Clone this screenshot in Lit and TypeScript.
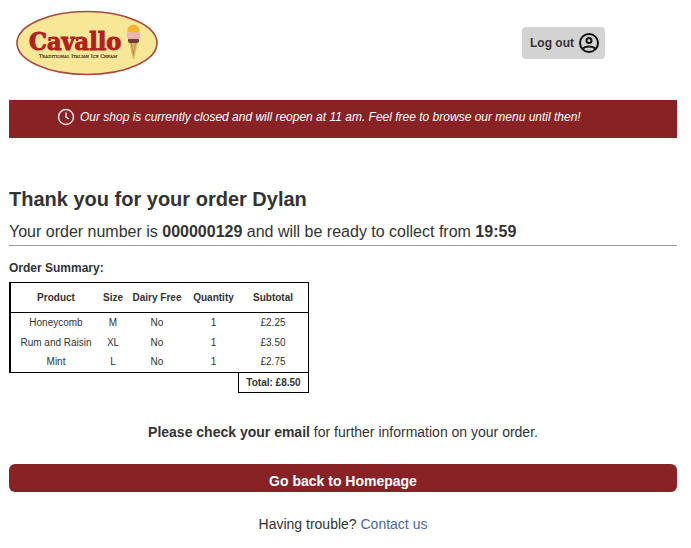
import { LitElement, html, css } from "lit";
import { customElement, state } from "lit/decorators.js";

interface OrderLine {
  product: string;
  size: string;
  dairyFree: string;
  quantity: number;
  subtotal: string;
}

@customElement("cavallo-logo")
class CavalloLogo extends LitElement {
  static styles = css`
    :host { display: block; width: 144px; height: 66px; }
    svg { display: block; }
    .name { font: bold 25px "DejaVu Serif Condensed", "DejaVu Serif", serif; fill: #b3201c; stroke: #b3201c; stroke-width: 1; }
    .tagline { font: 5px "DejaVu Serif", serif; fill: #4a4426; stroke: #4a4426; stroke-width: 0.2; font-variant: small-caps; }
  `;
  render() {
    return html`
      <svg width="144" height="66" viewBox="0 0 144 66" role="img" aria-label="Cavallo">
        <ellipse cx="72" cy="33" rx="70" ry="31.5" fill="#f8e796" stroke="#a94a41" stroke-width="1.6" />
        <text class="name" x="14" y="40">Cavallo</text>
        <text class="tagline" x="24" y="48">Traditional Italian Ice Cream</text>
        <path d="M114 31 h9 l-4 18 h-1 z" fill="#dcb267" />
        <path d="M116 32 l3 14 M121 32 l-3 12" stroke="#b98740" stroke-width="0.7" fill="none" />
        <rect x="113" y="28" width="11" height="5" rx="2" fill="#71402f" />
        <rect x="112" y="21" width="13" height="8" rx="3" fill="#eeb4b8" />
        <path d="M112.500 21.500 c-1-8 12-10 12 0 c-3 2-9 1-12 0z" fill="#f5b52f" />
      </svg>
    `;
  }
}

@customElement("order-table")
class OrderTable extends LitElement {
  @state() private lines: OrderLine[] = [
    { product: "Honeycomb", size: "M", dairyFree: "No", quantity: 1, subtotal: "£2.25" },
    { product: "Rum and Raisin", size: "XL", dairyFree: "No", quantity: 1, subtotal: "£3.50" },
    { product: "Mint", size: "L", dairyFree: "No", quantity: 1, subtotal: "£2.75" },
  ];

  static styles = css`
    :host { display: block; }
    table { border-spacing: 0; table-layout: fixed; width: 300px; font-size: 10px; line-height: 12px; text-align: center; }
    th, td { padding: 0; white-space: nowrap; }
    .product { width: 90px; }
    .size { width: 24px; }
    .dairy { width: 64px; }
    .quantity { width: 49px; }
    thead th { height: 29px; border-top: 1px solid #000; border-bottom: 1px solid #000; }
    tbody td { height: 19px; }
    tbody tr:first-child td { height: 20px; }
    tbody tr:last-child td { height: 20px; border-bottom: 1px solid #000; }
    thead th:first-child, tbody td:first-child { border-left: 2px solid #000; }
    thead th:last-child, tbody td:last-child { border-right: 1px solid #000; }
    .total { height: 19px; font-weight: bold; border: 1px solid #000; border-top: 0; }
  `;
  render() {
    return html`
      <table aria-label="Order Summary">
        <thead>
          <tr>
            <th class="product" scope="col">Product</th>
            <th class="size" scope="col">Size</th>
            <th class="dairy" scope="col">Dairy Free</th>
            <th class="quantity" scope="col">Quantity</th>
            <th scope="col">Subtotal</th>
          </tr>
        </thead>
        <tbody>
          ${this.lines.map(
            (line) => html`<tr>
              <td>${line.product}</td>
              <td>${line.size}</td>
              <td>${line.dairyFree}</td>
              <td>${line.quantity}</td>
              <td>${line.subtotal}</td>
            </tr>`
          )}
        </tbody>
        <tfoot>
          <tr>
            <td colspan="4"></td>
            <td class="total">Total: £8.50</td>
          </tr>
        </tfoot>
      </table>
    `;
  }
}

@customElement("app-root")
class AppRoot extends LitElement {
  static styles = css`
    :host { display: block; padding: 10px 14px 14px 9px; background: #fff; color: #333; font-family: "Liberation Sans", Arial, sans-serif; font-size: 14px; line-height: 16px; }
    * { box-sizing: border-box; }
    h1, h2, p { margin: 0; }
    header { display: flex; justify-content: space-between; align-items: center; padding: 0 72px 0 6px; margin-bottom: 24px; }
    .logout { display: flex; align-items: center; gap: 3px; height: 32px; padding: 0 4px 0 8px; margin-bottom: 1px; border: 0; border-radius: 4px; background: #d3d3d3; color: #333; font: bold 12px "Liberation Sans", Arial, sans-serif; }
    .banner { display: flex; align-items: center; gap: 5px; height: 38px; padding: 0 48px 4px; background: #882224; color: #fff; font-size: 12px; font-style: italic; }
    h1 { margin-top: 48px; font-size: 20px; line-height: 26px; }
    .number { padding: 10px 0 3px; border-bottom: 1px solid #999; font-size: 16px; line-height: 20px; }
    h2 { margin: 14px 0 6px; font-size: 12px; line-height: 16px; }
    .notice { margin: 31px 0 24px; text-align: center; }
    .home { display: block; width: 100%; height: 28px; padding: 6px 0 0; border: 0; border-radius: 6px; background: #882224; color: #fff; font: bold 14px "Liberation Sans", Arial, sans-serif; }
    .help { margin-top: 24px; text-align: center; }
    a { color: #4b66a8; text-decoration: none; }
  `;
  render() {
    return html`
      <header>
        <cavallo-logo></cavallo-logo>
        <button class="logout" type="button">
          Log out
          <svg width="24" height="24" viewBox="0 0 24 24" aria-hidden="true" fill="none" stroke="#111" stroke-width="2">
            <circle cx="12" cy="12" r="9" />
            <circle cx="12" cy="9.500" r="2.500" />
            <path d="M5.500 18 C8 14.500 16 14.500 18.500 18" />
          </svg>
        </button>
      </header>
      <section class="banner" role="status">
        <svg width="18" height="18" viewBox="0 0 18 18" aria-hidden="true" fill="none" stroke="#f5dfdf" stroke-width="1.500">
          <circle cx="9" cy="9" r="7.500" />
          <path d="M9 4.500 V9 L12 11" />
        </svg>
        <span>Our shop is currently closed and will reopen at 11 am. Feel free to browse our menu until then!</span>
      </section>
      <main>
        <h1>Thank you for your order Dylan</h1>
        <p class="number">Your order number is <b>000000129</b> and will be ready to collect from <b>19:59</b></p>
        <h2>Order Summary:</h2>
        <order-table></order-table>
        <p class="notice"><b>Please check your email</b> for further information on your order.</p>
        <button class="home" type="button">Go back to Homepage</button>
        <p class="help">Having trouble? <a href="#contact">Contact us</a></p>
      </main>
    `;
  }
}
